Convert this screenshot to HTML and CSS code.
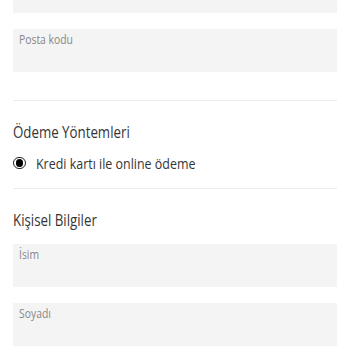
FILE: index.html
```html
<!DOCTYPE html>
<html lang="tr">
<head>
<meta charset="utf-8">
<link rel="stylesheet" href="styles.css">
</head>
<body>
<div class="page">
  <div class="field field-top"></div>
  <div class="field field-gap"><span class="sq">Posta kodu</span></div>
  <div class="divider div-1"></div>
  <h2 class="heading h-pay"><span class="sq">Ödeme Yöntemleri</span></h2>
  <label class="radio-row">
    <span class="radio"><span class="dot"></span></span>
    <span class="radio-label sq">Kredi kartı ile online ödeme</span>
  </label>
  <div class="divider div-2"></div>
  <h2 class="heading h-personal"><span class="sq">Kişisel Bilgiler</span></h2>
  <div class="field"><span class="sq">İsim</span></div>
  <div class="field field-gap"><span class="sq">Soyadı</span></div>
</div>
</body>
</html>
```
FILE: styles.css
```css
html, body {
  margin: 0;
  padding: 0;
  background: #ffffff;
  overflow: hidden;
}
.page {
  padding: 0 13px;
  font-family: "Open Sans", "Noto Sans", sans-serif;
  color: #333333;
}
.sq {
  display: inline-block;
  white-space: nowrap;
  transform: scaleX(0.83);
  transform-origin: left center;
}
.field {
  height: 43px;
  box-sizing: border-box;
  background: #f4f4f4;
  padding: 3px 6px;
  font-size: 12.5px;
  line-height: 16px;
  color: #888888;
}
.field-top {
  margin-top: -30px;
}
.field-gap {
  margin-top: 16px;
}
.divider {
  height: 1px;
  background: #ececec;
}
.div-1 {
  margin-top: 28px;
}
.heading {
  margin: 0;
  font-weight: 400;
  font-size: 16px;
  line-height: 20px;
  color: #353535;
}
.h-pay {
  margin-top: 21px;
}
.h-personal {
  margin-top: 21px;
  margin-bottom: 14px;
}
.radio-row {
  display: flex;
  align-items: center;
  gap: 10px;
  margin-top: 11px;
  height: 20px;
}
.radio {
  width: 12.5px;
  height: 12.5px;
  border: 1px solid #222;
  border-radius: 50%;
  display: flex;
  align-items: center;
  justify-content: center;
  box-sizing: border-box;
  flex: none;
}
.dot {
  width: 7.5px;
  height: 7.5px;
  background: #000;
  border-radius: 50%;
}
.radio-label {
  font-size: 15px;
  line-height: 20px;
  color: #353535;
}
.div-2 {
  margin-top: 15px;
}
```
